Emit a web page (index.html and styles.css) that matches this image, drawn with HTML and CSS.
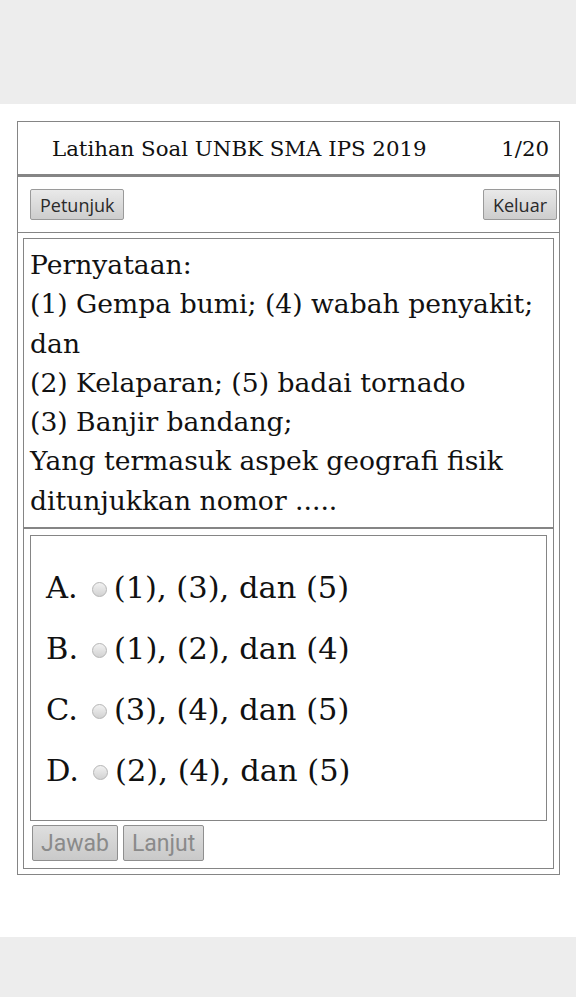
FILE: index.html
```html
<!DOCTYPE html>
<html lang="id">
<head>
<meta charset="utf-8">
<title>Latihan Soal UNBK SMA IPS 2019</title>
<link rel="stylesheet" href="styles.css">
</head>
<body>
<div class="topband"></div>
<main class="page">
  <div class="frame">
    <div class="header">
      <span class="title">Latihan Soal UNBK SMA IPS 2019</span>
      <span class="count">1/20</span>
    </div>
    <div class="toolbar">
      <button class="btn">Petunjuk</button>
      <button class="btn">Keluar</button>
    </div>
    <div class="content">
      <div class="inner">
        <div class="question">Pernyataan:<br>(1) Gempa bumi; (4) wabah penyakit; dan<br>(2) Kelaparan; (5) badai tornado<br>(3) Banjir bandang;<br>Yang termasuk aspek geografi fisik ditunjukkan nomor .....</div>
        <div class="answers">
          <div class="opt"><span class="letter">A.</span><span class="radio"></span><span class="otext">(1), (3), dan (5)</span></div>
          <div class="opt"><span class="letter">B.</span><span class="radio"></span><span class="otext">(1), (2), dan (4)</span></div>
          <div class="opt"><span class="letter">C.</span><span class="radio"></span><span class="otext">(3), (4), dan (5)</span></div>
          <div class="opt"><span class="letter">D.</span><span class="radio"></span><span class="otext">(2), (4), dan (5)</span></div>
        </div>
        <div class="actions">
          <button class="btn big" disabled>Jawab</button>
          <button class="btn big" disabled>Lanjut</button>
        </div>
      </div>
    </div>
  </div>
</main>
<div class="bottomband"></div>
</body>
</html>
```
FILE: styles.css
```css
html, body {
  margin: 0;
  padding: 0;
  background: #ededed;
}
.topband {
  height: 104px;
  background: #ededed;
}
.bottomband {
  height: 60px;
  background: #ededed;
}
.page {
  background: #fff;
  height: 833px;
  padding-top: 17px;
  box-sizing: border-box;
}
.frame {
  margin-left: 17px;
  width: 543px;
  box-sizing: border-box;
  border: 1px solid #858585;
  font-family: "DejaVu Serif", serif;
  color: #111;
}
.header {
  height: 52px;
  border-bottom: 3px solid #858585;
  display: flex;
  align-items: center;
  justify-content: space-between;
  padding: 0 10px 0 34px;
  font-size: 21.3px;
}
.toolbar {
  height: 55px;
  border-bottom: 1px solid #858585;
  display: flex;
  align-items: center;
  justify-content: space-between;
  padding: 0 2px 0 12px;
}
.btn {
  font-family: "Open Sans", "Noto Sans", sans-serif;
  font-size: 18px;
  color: #2a2a2a;
  height: 31px;
  padding: 0 9px;
  border: 1px solid #9a9a9a;
  border-radius: 2px;
  background: linear-gradient(#e9e9e9, #cdcdcd);
  line-height: 1;
}
.content {
  padding: 5px;
}
.inner {
  border: 1px solid #858585;
}
.question {
  font-size: 26.6px;
  line-height: 39.3px;
  padding: 6px 6px 7px 6px;
  border-bottom: 2px solid #858585;
}
.answers {
  margin: 6px 6px 0 6px;
  border: 1px solid #858585;
  padding: 21px 15px 19px 15px;
}
.opt {
  display: flex;
  align-items: center;
  height: 61px;
  font-size: 30.5px;
}
.radio {
  width: 13px;
  height: 13px;
  border-radius: 50%;
  border: 1px solid #b5b5b5;
  background: linear-gradient(#f2f2f2, #d2d2d2);
  margin: 4px 7px 0 14px;
  flex: none;
}
.actions {
  display: flex;
  gap: 5px;
  padding: 4px 0 7px 8px;
}
.btn.big {
  font-family: Roboto, "Noto Sans", sans-serif;
  font-size: 23px;
  color: #8a8a8a;
  height: 36px;
  padding: 0 8px;
  border: 1px solid #8f8f8f;
  background: linear-gradient(#dedede, #c9c9c9);
}
```
